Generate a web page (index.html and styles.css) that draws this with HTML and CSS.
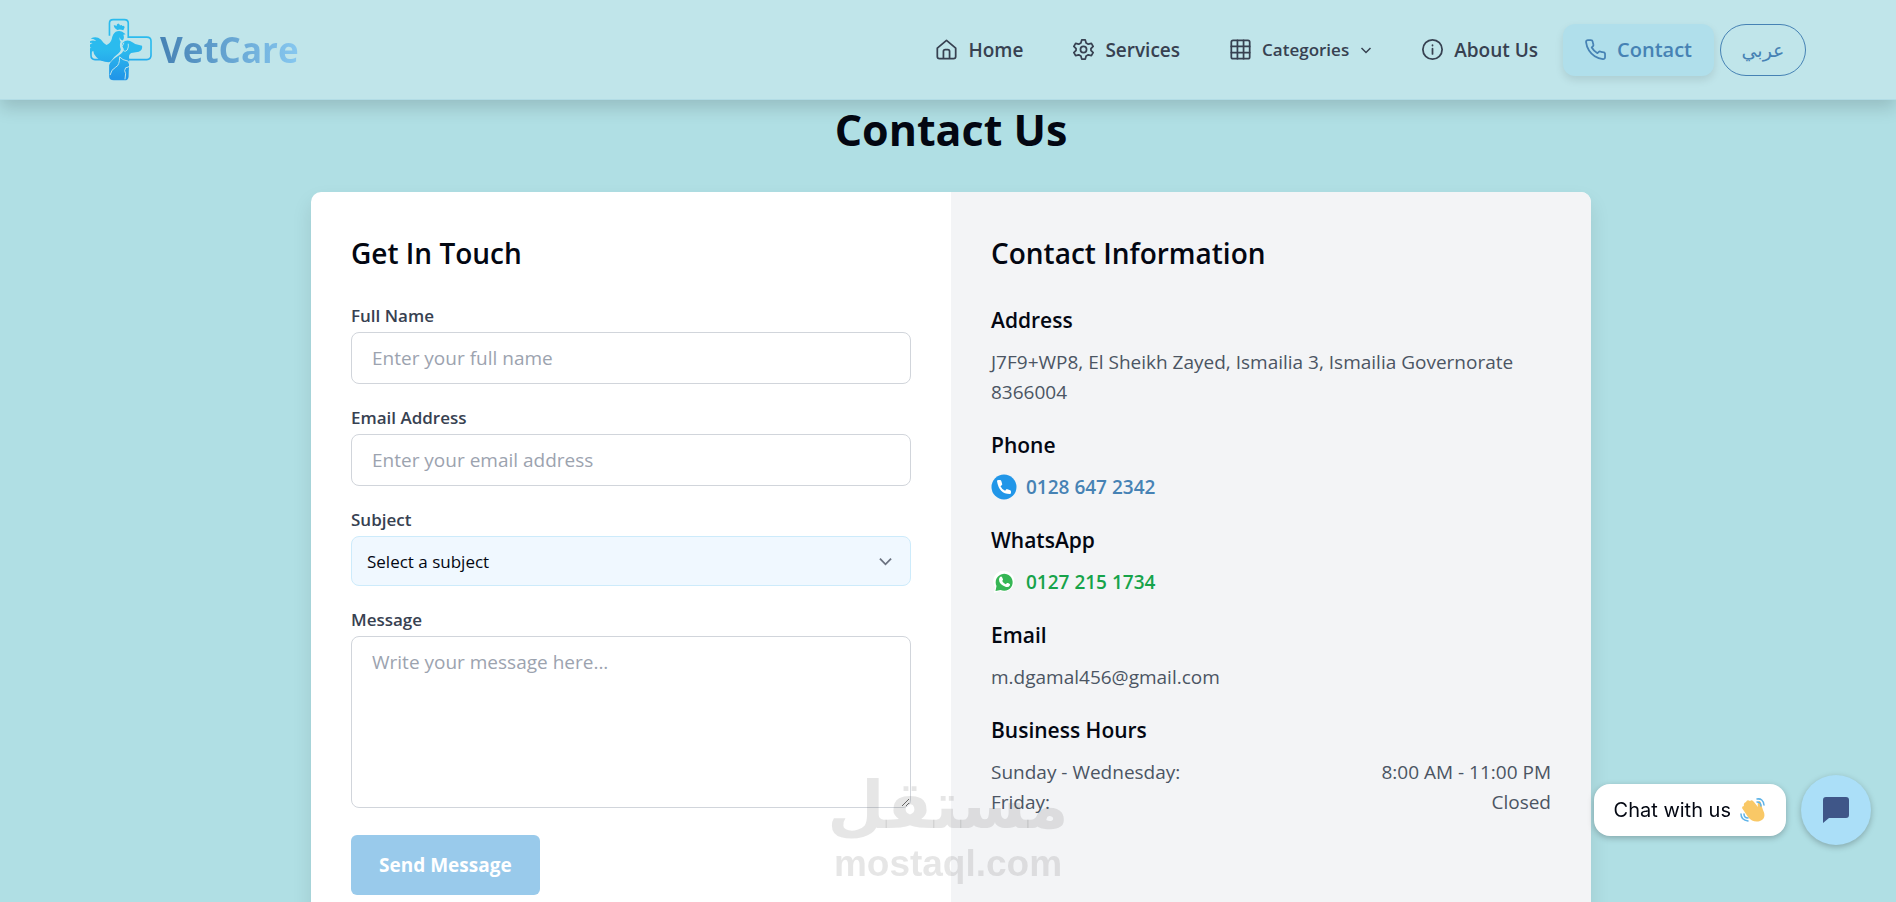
FILE: index.html
```html
<!DOCTYPE html>
<html lang="en">
<head>
    <meta charset="UTF-8">
    <meta name="viewport" content="width=device-width, initial-scale=1.0">
    <title>VetCare - Contact Us</title>
    <link rel="stylesheet" href="styles.css">
</head>
<body>

    <!-- Navbar -->
    <header class="navbar">
        <a href="#" class="brand">
            <svg class="brand-logo" viewBox="18 21 188 192" aria-hidden="true">
                <defs>
                    <linearGradient id="logoFill" gradientUnits="userSpaceOnUse" x1="0" y1="21" x2="0" y2="210">
                        <stop offset="0.5" stop-color="#2bbbee"/>
                        <stop offset="0.95" stop-color="#2196e8"/>
                    </linearGradient>
                </defs>
                <path d="M77 74V36q0-11 11-11h34q12 0 12 11v42h56q13 0 13 12v43q0 13-13 13h-58M75 146H33q-12 0-12-12v-14" fill="none" stroke="url(#logoFill)" stroke-width="5"/>
                <!-- rooster -->
                <path d="M90 42q6-1 8 3 1-8 6-8 4 2 5 6 5-4 7 1 7-2 7 5l-4 8q-10-4-18-1-10-4-11-14z" fill="url(#logoFill)"/>
                <path d="M96 62q10-5 20 0l10 7-7 2q5 11-3 17-7-3-8-10-2 8 3 14-4 7-1 19 5 8-7 17-14 9-22 24l-6 2q-25-1-38-16-9-9-9-18-8 2-8 12-9-14 2-24-6 1-8 8-4-14 12-20-8-2-15 2 8-14 26-8-6-8-17-8 17-9 31 3 9 13 17 17 12-4 16-18 3-16 12-22z" fill="url(#logoFill)"/>
                <!-- dog -->
                <path d="M117 95q13-13 31-1l7 5 21 5q2 14-10 18l-23 4q-9 5-6 18l-2 54q-1 11-12 11H90q-14 0-14-13v-33q4-14 30-30 14-9 14-20-9-6-3-18z" fill="url(#logoFill)"/>
                <path d="M121 95q-10 10-2 24 6 5 12-2 5-9 3-19M79 193q3-17 17-24 12-6 12-31l10 8 16 5 5 12q-2 7-13 8-6 8 0 18l-2 17" fill="none" stroke="#c0e5ea" stroke-width="3"/>
            </svg>
            <span class="brand-name">VetCare</span>
        </a>
        <nav class="nav-links">
            <a href="#" class="nav-link">
                <svg class="icon" viewBox="0 0 24 24" aria-hidden="true"><path d="M1.500 10.500 12 1.500l10.500 9V20a2.500 2.500 0 0 1-2.500 2.500H4A2.500 2.500 0 0 1 1.500 20zM8.500 22v-8a2 2 0 0 1 2-2h3a2 2 0 0 1 2 2v8"/></svg>
                Home
            </a>
            <a href="#" class="nav-link">
                <svg class="icon" viewBox="0 0 24 24" aria-hidden="true"><path d="M10 1h4l1 3.500 2.500 1.400L21 5l2 3.500-2.500 2.600v1.800L23 15.500 21 19l-3.500-.9-2.500 1.400-1 3.500h-4l-1-3.500-2.500-1.400L3 19l-2-3.500 2.500-2.600v-1.800L1 8.500 3 5l3.500.9L9 4.500z"/><circle cx="12" cy="12" r="3.500"/></svg>
                Services
            </a>
            <button type="button" class="nav-link nav-menu">
                <svg class="icon" viewBox="0 0 24 24" aria-hidden="true"><rect x="1.500" y="1.500" width="21" height="21" rx="2"/><path d="M8.500 1.500v21M15.500 1.500v21M1.500 8.500h21M1.500 15.500h21"/></svg>
                Categories
                <svg class="chevron" viewBox="0 0 12 12" aria-hidden="true"><path d="M1.500 4 6 8.500 10.500 4"/></svg>
            </button>
            <a href="#" class="nav-link">
                <svg class="icon" viewBox="0 0 24 24" aria-hidden="true"><circle cx="12" cy="12" r="11"/><path d="M12 11v6M12 7v.5"/></svg>
                About Us
            </a>
            <a href="#" class="nav-link active">
                <svg class="icon" viewBox="0 0 24 24" aria-hidden="true"><path d="M22.900 17.600v3.100a2.200 2.200 0 0 1-2.400 2.200 21.500 21.500 0 0 1-9.400-3.300 21 21 0 0 1-6.500-6.500A21.500 21.500 0 0 1 1.200 3.600a2.200 2.200 0 0 1 2.200-2.400h3.200a2.200 2.200 0 0 1 2.200 1.900c.1 1 .4 2 .7 3a2.200 2.200 0 0 1-.5 2.300L7.700 9.700a17 17 0 0 0 6.500 6.500l1.300-1.300a2.200 2.200 0 0 1 2.300-.5c1 .3 2 .6 3 .7a2.200 2.200 0 0 1 2.100 2.500z"/></svg>
                Contact
            </a>
            <button type="button" class="lang-button" lang="ar">عربي</button>
        </nav>
    </header>

    <!-- Contact Page -->
    <main class="contact-page">
        <h1>Contact Us</h1>
        <div class="contact-card">
            <section class="contact-form">
                <h2>Get In Touch</h2>
                <form>
                    <div class="field">
                        <label for="name">Full Name</label>
                        <input type="text" id="name" placeholder="Enter your full name">
                    </div>
                    <div class="field">
                        <label for="email">Email Address</label>
                        <input type="email" id="email" placeholder="Enter your email address">
                    </div>
                    <div class="field">
                        <label for="subject">Subject</label>
                        <select id="subject">
                            <option>Select a subject</option>
                        </select>
                    </div>
                    <div class="field">
                        <label for="message">Message</label>
                        <textarea id="message" placeholder="Write your message here..."></textarea>
                    </div>
                    <button type="submit" class="send-button">Send Message</button>
                </form>
            </section>

            <section class="contact-info">
                <h2>Contact Information</h2>
                <h3>Address</h3>
                <p>J7F9+WP8, El Sheikh Zayed, Ismailia 3, Ismailia Governorate 8366004</p>
                <h3>Phone</h3>
                <a href="tel:01286472342" class="info-link">
                    <svg viewBox="0 0 26 26" aria-hidden="true"><circle cx="13" cy="13" r="12.500" fill="#2196e8"/><path d="M6 7q0-1 1.500-1H9q1 0 1.300 1l.9 3q.2.800-.5 1.300l-1.200.9q1.500 3.300 4.600 4.600l1-1.300q.5-.6 1.300-.3l2.800 1q.8.300.8 1.200v1.300q0 1.300-1.300 1.300Q8 20 6 7z" fill="#fff"/></svg>
                    0128 647 2342
                </a>
                <h3>WhatsApp</h3>
                <a href="https://wa.me/01272151734" class="info-link whatsapp">
                    <svg viewBox="0 0 26 26" aria-hidden="true"><path d="M3 24l1-6a10.500 10.500 0 1 1 5 4z" fill="#fff"/><path d="M4.500 22l1-5a8.500 8.500 0 1 1 4 4z" fill="#36b655"/><path d="M9 8q1.500-1 2.200.5l.8 1.800q.2.700-.8 1.700 1.300 2.400 3.600 3.300l1.200-1.200q.4-.3 1 0l1.800 1q.5.400 0 1.500-1 1.900-3.800 1.400Q8 15.500 8 10.500 8 9 9 8z" fill="#fff"/></svg>
                    0127 215 1734
                </a>
                <h3>Email</h3>
                <p>m.dgamal456@gmail.com</p>
                <h3>Business Hours</h3>
                <table class="hours">
                    <tr>
                        <th scope="row">Sunday - Wednesday:</th>
                        <td>8:00 AM - 11:00 PM</td>
                    </tr>
                    <tr>
                        <th scope="row">Friday:</th>
                        <td>Closed</td>
                    </tr>
                </table>
            </section>
        </div>
    </main>

    <!-- Watermark -->
    <div class="watermark">
        <span class="watermark-ar" lang="ar" dir="rtl">مستقل</span>
        <span class="watermark-en">mostaql.com</span>
    </div>

    <!-- Chat Widget -->
    <div class="chat-widget">
        <div class="chat-label">
            Chat with us
            <svg viewBox="0 0 26 26" aria-hidden="true">
                <path d="M2 11q0-2 2-2-1-3 2-4 1-3 4-1 2-2 4 1l4 5q-1-5 1-6 2 0 2 3l2 6q4 8-3 11-7 2-12-4z" fill="#f9c866"/>
                <path d="M17 2q6-1 7 6M17 5q4 0 4 4M1 17q0 6 7 7M4 17q0 4 4 4" fill="none" stroke="#5eb3e8" stroke-width="1.500" stroke-linecap="round"/>
            </svg>
        </div>
        <button type="button" class="chat-button" aria-label="Open chat">
            <svg viewBox="0 0 26 26" aria-hidden="true"><path d="M3 0h20q3 0 3 3v15q0 3-3 3H6l-6 5V3q0-3 3-3z" fill="#3f5688"/></svg>
        </button>
    </div>

</body>
</html>
```
FILE: styles.css
```css
* {
    box-sizing: border-box;
}

body {
    font-family: "Open Sans", "Noto Sans", sans-serif;
    font-size: 19px;
    line-height: 30px;
    background-color: #b0dfe4;
    color: #030712;
    margin: 0;
    overflow-x: hidden;
}

button,
input,
select,
textarea {
    font-family: inherit;
}

/* Navbar */
.navbar {
    position: sticky;
    top: 0;
    z-index: 10;
    display: flex;
    align-items: center;
    justify-content: space-between;
    height: 100px;
    padding: 0 90px;
    background-color: #c0e5ea;
    border-bottom: 1px solid #b3dde6;
    box-shadow: 0 8px 16px rgba(0, 0, 0, 0.15);
}

.brand {
    display: flex;
    align-items: center;
    gap: 8px;
    text-decoration: none;
}

.brand-logo {
    width: 62px;
    height: 64px;
}

.brand-name {
    font-size: 35px;
    line-height: 48px;
    font-weight: 700;
    background: linear-gradient(to right, #4682b4, #87c8f0);
    background-clip: text;
    -webkit-background-clip: text;
    color: transparent;
}

.nav-links {
    display: flex;
    align-items: center;
}

.nav-link {
    display: flex;
    align-items: center;
    gap: 11px;
    height: 52px;
    padding: 0 25px;
    border: none;
    background: none;
    color: #374151;
    font-size: 19px;
    font-weight: 600;
    text-decoration: none;
    white-space: nowrap;
}

.nav-menu {
    font-size: 17px;
}

.icon {
    width: 21px;
    height: 21px;
    fill: none;
    stroke: currentColor;
    stroke-width: 2;
    stroke-linecap: round;
    stroke-linejoin: round;
}

.chevron {
    width: 12px;
    height: 12px;
    fill: none;
    stroke: currentColor;
    stroke-width: 1.5;
}

.active {
    padding: 0 22px;
    border-radius: 12px;
    background-color: #b0dfeb;
    color: #4682b4;
    font-size: 20px;
    box-shadow: 0 4px 8px rgba(0, 0, 0, 0.1);
}

.lang-button {
    height: 52px;
    width: 86px;
    margin-left: 6px;
    border: 1px solid #4682b4;
    border-radius: 26px;
    background: none;
    color: #4682b4;
    font-family: "DejaVu Sans", sans-serif;
    font-size: 19px;
}

/* Contact page */
.contact-page {
    max-width: 1286px;
    margin: 0 auto;
    padding: 0 0 60px 6px;
}

h1 {
    margin: 0 0 32px;
    font-size: 43px;
    line-height: 60px;
    font-weight: 700;
    text-align: center;
}

h2 {
    margin: 0 0 30px;
    font-size: 28px;
    line-height: 42px;
    font-weight: 600;
}

.contact-card {
    display: grid;
    grid-template-columns: 1fr 1fr;
    background-color: #fff;
    border-radius: 10px;
    overflow: hidden;
    box-shadow: 0 10px 20px rgba(0, 0, 0, 0.1);
}

.contact-form,
.contact-info {
    padding: 40px;
}

.contact-info {
    background-color: #f3f4f6;
    color: #4b5563;
}

.contact-info h2,
.contact-info h3 {
    color: #030712;
}

.field {
    display: flex;
    flex-direction: column;
    gap: 4px;
    margin-bottom: 22px;
}

label {
    color: #374151;
    font-size: 17px;
    line-height: 24px;
    font-weight: 600;
}

input,
textarea {
    width: 100%;
    height: 52px;
    padding: 10px 20px;
    border: 1px solid #d1d5db;
    border-radius: 8px;
    font-size: 19px;
    line-height: 30px;
}

textarea {
    height: 172px;
}

input::placeholder,
textarea::placeholder {
    color: #9ca3af;
}

select {
    appearance: none;
    height: 50px;
    padding: 0 15px;
    border: 1px solid #cdebfb;
    border-radius: 8px;
    background: #f0f8ff url("data:image/svg+xml,%3Csvg xmlns='http://www.w3.org/2000/svg' viewBox='0 0 14 14' fill='none' stroke='%236b7280' stroke-width='2'%3E%3Cpath d='M1 4l6 6 6-6'/%3E%3C/svg%3E") no-repeat right 18px center / 13px 13px;
    color: #030712;
    font-size: 17px;
}

.send-button {
    height: 60px;
    margin-top: 5px;
    padding: 0 28px;
    border: none;
    border-radius: 6px;
    background-color: #99caeb;
    color: #fff;
    font-size: 19px;
    font-weight: 700;
}

h3 {
    margin: 0 0 11px;
    font-size: 21px;
    line-height: 32px;
    font-weight: 600;
}

p {
    margin: 0 0 22px;
}

.info-link {
    display: flex;
    align-items: center;
    gap: 9px;
    margin-bottom: 22px;
    color: #4682b4;
    font-weight: 600;
    text-decoration: none;
}

.info-link svg {
    width: 26px;
    height: 26px;
}

.whatsapp {
    color: #16a34a;
}

.hours {
    width: 100%;
    border-collapse: collapse;
}

.hours th,
.hours td {
    padding: 0;
    font-weight: 400;
    text-align: left;
}

.hours td {
    text-align: right;
}

/* Watermark */
.watermark {
    position: fixed;
    left: 0;
    right: 0;
    bottom: 16px;
    display: flex;
    flex-direction: column;
    align-items: center;
    color: rgba(100, 100, 100, 0.16);
    font-weight: 700;
    pointer-events: none;
}

.watermark-ar {
    font-family: "DejaVu Sans", sans-serif;
    font-size: 66px;
    line-height: 72px;
}

.watermark-en {
    font-family: "Liberation Sans", sans-serif;
    font-size: 37px;
    line-height: 44px;
}

/* Chat widget */
.chat-widget {
    position: fixed;
    right: 25px;
    bottom: 57px;
    z-index: 20;
    display: flex;
    align-items: center;
    gap: 15px;
}

.chat-label {
    display: flex;
    align-items: center;
    gap: 9px;
    height: 52px;
    padding: 0 20px;
    border-radius: 16px;
    background-color: #fff;
    font-family: Inter, sans-serif;
    font-size: 20px;
    box-shadow: 0 2px 6px rgba(0, 0, 0, 0.25);
}

.chat-label svg,
.chat-button svg {
    width: 26px;
    height: 26px;
}

.chat-button {
    display: flex;
    align-items: center;
    justify-content: center;
    width: 70px;
    height: 70px;
    border: none;
    border-radius: 50%;
    background-color: #abdff8;
    box-shadow: 0 2px 6px rgba(0, 0, 0, 0.25);
}
```
